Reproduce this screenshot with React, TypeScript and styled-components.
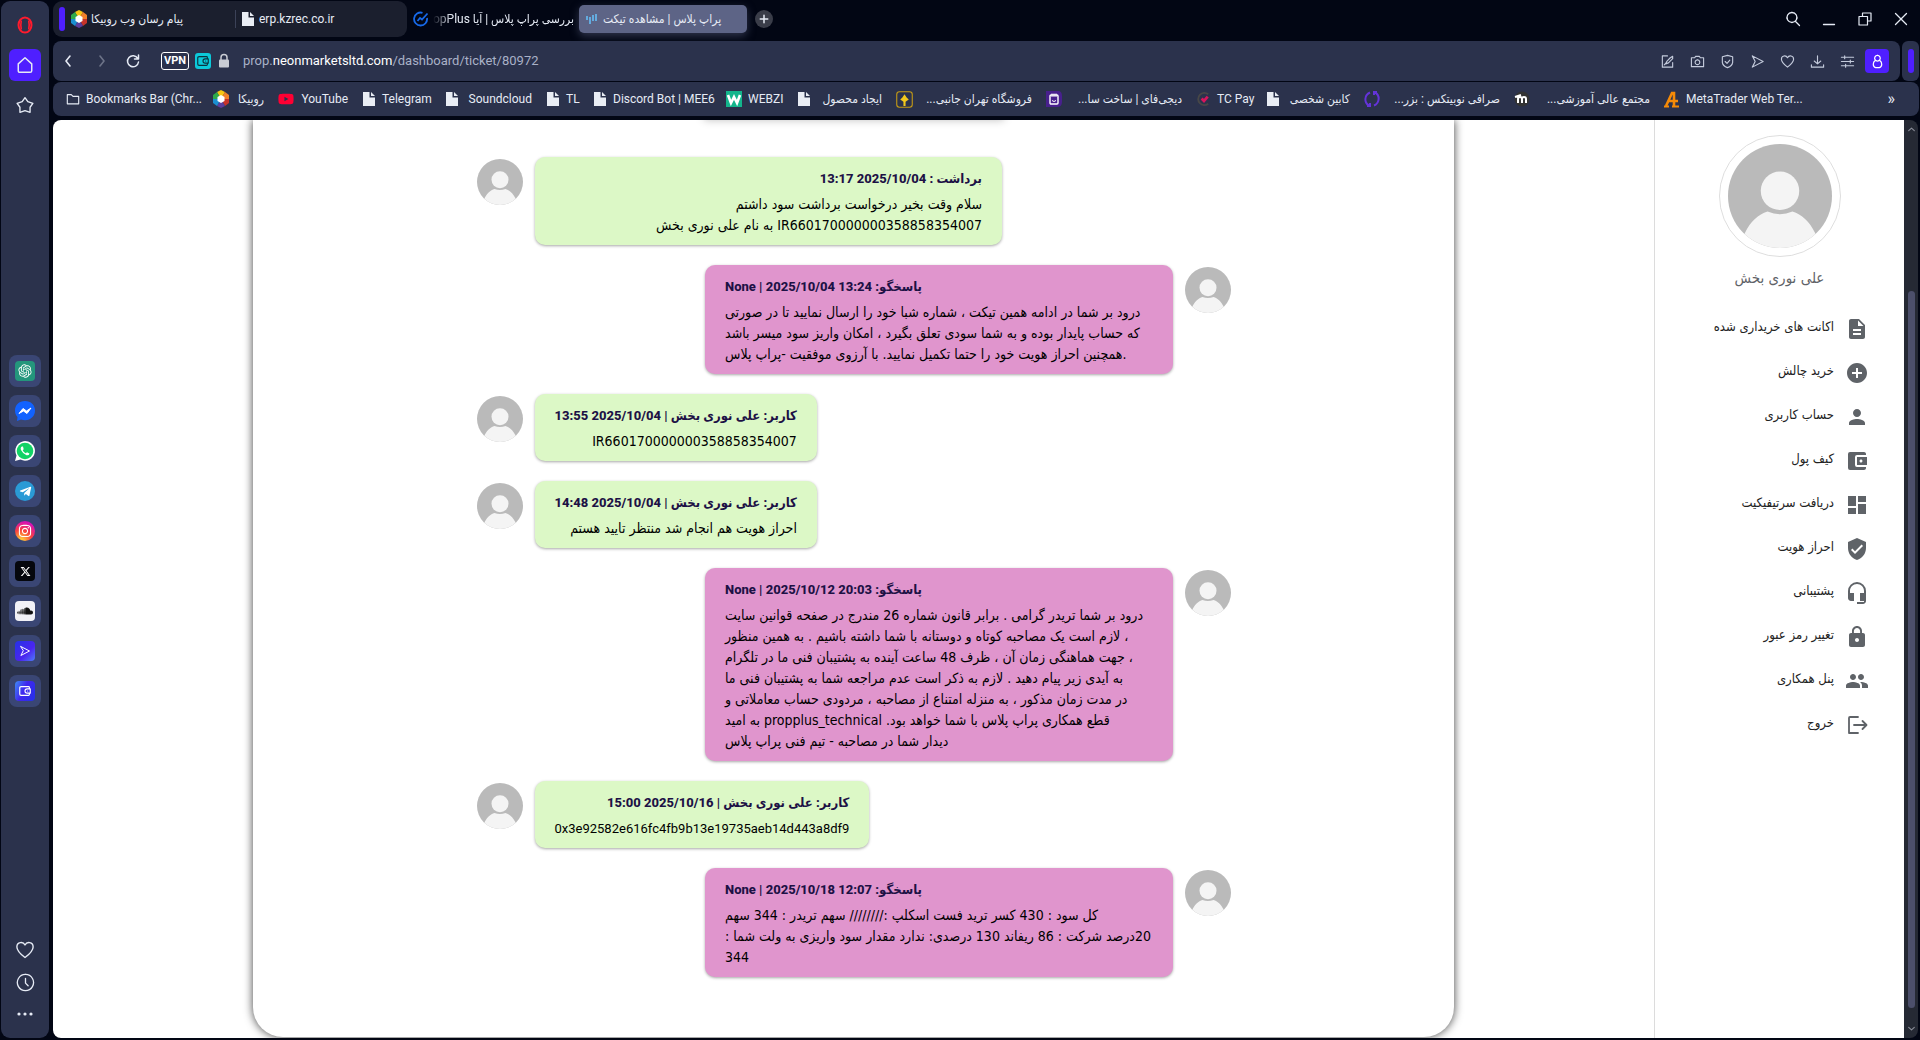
import React from "react";
import styled, { createGlobalStyle } from "styled-components";
import {
  MdDescription,
  MdAddCircle,
  MdPerson,
  MdAccountBalanceWallet,
  MdDashboard,
  MdVerifiedUser,
  MdHeadsetMic,
  MdLock,
  MdPeople,
} from "react-icons/md";
import { FaTelegramPlane, FaInstagram, FaSoundcloud, FaYoutube } from "react-icons/fa";
import { FaXTwitter } from "react-icons/fa6";
import { RiOpenaiFill } from "react-icons/ri";

const c = {
  frame: "#020614",
  panel: "#2b324c",
  group: "#1b1f2e",
  accent: "#4f1fff",
  activeTab: "#5d6486",
  light: "#e6ebf5",
  dim: "#c4cbdc",
};

const uiFont = `Roboto, "DejaVu Sans Condensed", "DejaVu Sans", sans-serif`;
const persianFont = `"DejaVu Sans Condensed", "DejaVu Sans", sans-serif`;

const GlobalStyle = createGlobalStyle`
  *, *::before, *::after { box-sizing: border-box; }
  body { margin: 0; background: ${c.frame}; font-family: ${uiFont}; }
  button { border: 0; padding: 0; background: none; color: inherit; font: inherit; cursor: pointer; }
  a { color: inherit; text-decoration: none; }
  ul { list-style: none; margin: 0; padding: 0; }
  svg { display: block; flex: none; }
`;

/* ---------- window frame ---------- */

const Window = styled.div`
  display: flex;
  gap: 4px;
  height: 100vh;
  padding: 1px 1px 2px;
  overflow: hidden;
  color: ${c.light};
`;

const Rail = styled.nav`
  display: flex;
  flex-direction: column;
  align-items: center;
  justify-content: space-between;
  width: 48px;
  flex: none;
  padding: 8px 0;
  border-radius: 9px;
  background: ${c.panel};
`;

const RailGroup = styled.div<{ $gap: number; $top?: number }>`
  display: flex;
  flex-direction: column;
  align-items: center;
  gap: ${(p) => p.$gap}px;
  padding-top: ${(p) => p.$top ?? 0}px;
`;

const RailButton = styled.button<{ $active?: boolean }>`
  display: grid;
  place-items: center;
  width: 32px;
  height: 32px;
  border-radius: 6px;
  color: ${c.light};
  background: ${(p) => (p.$active ? c.accent : "transparent")};
`;

const AppButton = styled(RailButton)`
  border-radius: 8px;
  background: #3a4674;
`;

const AppTile = styled.span<{ $bg: string; $round?: boolean }>`
  display: grid;
  place-items: center;
  width: 20px;
  height: 20px;
  border-radius: ${(p) => (p.$round ? "50%" : "4px")};
  background: ${(p) => p.$bg};
  color: #fff;
`;

const Browser = styled.div`
  display: flex;
  flex-direction: column;
  flex: 1;
  min-width: 0;
`;

/* ---------- tabs ---------- */

const TabStrip = styled.header`
  display: flex;
  align-items: center;
  height: 36px;
  margin-bottom: 4px;
  font-size: 12px;
`;

const TabGroup = styled.div`
  display: flex;
  align-items: center;
  width: 354px;
  height: 36px;
  padding-left: 6px;
  border-radius: 9px;
  background: ${c.group};
`;

const GroupMark = styled.span`
  flex: none;
  width: 6px;
  height: 24px;
  border-radius: 3px;
  background: ${c.accent};
`;

const Tab = styled.button<{ $w: number; $active?: boolean; $divided?: boolean }>`
  display: flex;
  align-items: center;
  gap: 4px;
  width: ${(p) => p.$w}px;
  height: 28px;
  padding: 0 6px;
  border-radius: 5px;
  background: ${(p) => (p.$active ? c.activeTab : "transparent")};
  box-shadow: ${(p) => (p.$active ? "0 3px 8px rgba(93, 100, 134, 0.5)" : "none")};
  ${(p) => p.$divided && `&::before { content: ""; width: 1px; height: 18px; margin: 0 1px 0 -6px; background: #3c4258; }`}
`;

const TabTitle = styled.span<{ $fade?: boolean }>`
  flex: ${(p) => (p.$fade ? 1 : "none")};
  text-align: start;
  white-space: nowrap;
  ${(p) => p.$fade && "mask-image: linear-gradient(to right, transparent, #000 18px);"}
`;

const NewTab = styled.button`
  display: grid;
  place-items: center;
  width: 18px;
  height: 18px;
  margin-left: 8px;
  border-radius: 50%;
  background: #3a3d49;
`;

const WindowControls = styled.div`
  display: flex;
  gap: 20px;
  margin-left: auto;
  padding-right: 10px;
`;

const Control = styled.button`
  display: grid;
  place-items: center;
  width: 16px;
  height: 16px;
`;

/* ---------- address row ---------- */

const AddressRow = styled.div`
  display: flex;
  gap: 2px;
  height: 40px;
  margin-bottom: 1px;
`;

const AddressBar = styled.div`
  display: flex;
  align-items: center;
  flex: 1;
  padding: 0 11px 0 0;
  border-radius: 8px;
  background: ${c.panel};
`;

const NavButton = styled.button<{ $dim?: boolean }>`
  display: grid;
  place-items: center;
  width: 32px;
  height: 24px;
  opacity: ${(p) => (p.$dim ? 0.35 : 1)};
`;

const Vpn = styled.button`
  width: 28px;
  height: 18px;
  margin: 0 6px 0 12px;
  border: 1px solid #fff;
  border-radius: 3px;
  font-size: 11px;
  font-weight: 700;
  line-height: 16px;
  color: #fff;
`;

const Badge = styled.button`
  display: grid;
  place-items: center;
  width: 16px;
  height: 16px;
  margin-right: 6px;
  border-radius: 3px;
  background: #0cc9da;
  color: #0b3340;
`;

const Url = styled.button`
  flex: 1;
  padding-left: 12px;
  text-align: left;
  font-size: 13px;
  line-height: 20px;
  color: #a9b1c7;

  b {
    font-weight: 400;
    color: #fff;
  }
`;

const Tools = styled.div`
  display: flex;
  gap: 6px;
`;

const Tool = styled.button<{ $active?: boolean }>`
  display: grid;
  place-items: center;
  width: 24px;
  height: 24px;
  border-radius: 4px;
  color: ${(p) => (p.$active ? "#fff" : c.dim)};
  background: ${(p) => (p.$active ? c.accent : "transparent")};
`;

const SideHandle = styled.button`
  display: grid;
  place-items: center;
  width: 17px;
  border-radius: 6px;
  background: ${c.panel};
`;

/* ---------- bookmarks ---------- */

const Bookmarks = styled.nav`
  display: flex;
  align-items: center;
  height: 34px;
  margin-bottom: 4px;
  padding: 0 24px 0 13px;
  border-radius: 8px;
  background: ${c.panel};
  font-size: 12px;
  line-height: 18px;
`;

const Bookmark = styled.a<{ $w: number }>`
  display: flex;
  align-items: center;
  gap: 6px;
  width: ${(p) => p.$w}px;
  flex: none;
  white-space: nowrap;
`;

const BookmarkLabel = styled.span`
  flex: 1;
  padding-right: 14px;
  text-align: right;
`;

const More = styled.button`
  margin-left: auto;
  font-size: 16px;
`;

/* ---------- page ---------- */

const Viewport = styled.div`
  display: flex;
  flex: 1;
  min-height: 0;
  margin-right: 1px;
`;

const Page = styled.div`
  display: flex;
  flex: 1;
  min-width: 0;
  overflow: hidden;
  border-radius: 8px 0 0 8px;
  background: #fff;
  color: #000;
  font-family: ${persianFont};
`;

const Main = styled.main`
  flex: 1;
  min-width: 0;
`;

const Card = styled.section`
  display: flex;
  flex-direction: column;
  align-items: center;
  width: 75%;
  margin: 0 auto;
  padding-bottom: 60px;
  border-radius: 0 0 30px 30px;
  box-shadow: 0 0 10px rgba(0, 0, 0, 0.75);
`;

const CardHeading = styled.div`
  width: 300px;
  height: 20px;
  margin: -20px 0 37px;
  box-shadow: 0 0 8px rgba(0, 0, 0, 0.25);
`;

const Chat = styled.div`
  display: flex;
  flex-direction: column;
  gap: 20px;
  width: 63%;
  max-width: 754px;
`;

const Row = styled.article<{ $agent?: boolean }>`
  display: flex;
  flex-direction: ${(p) => (p.$agent ? "row-reverse" : "row")};
  gap: 12px;
`;

const AvatarSlot = styled.div`
  padding-top: 2px;
`;

const Bubble = styled.div<{ $agent?: boolean; $full?: boolean }>`
  display: flex;
  flex-direction: column;
  gap: 5px;
  width: ${(p) => (p.$full ? "62%" : "auto")};
  padding: 11px 20px 9px;
  border-radius: 10px;
  background: ${(p) => (p.$agent ? "#e095cd" : "#dcf8c6")};
  box-shadow: 0 1px 3px rgba(0, 0, 0, 0.35);
  text-align: ${(p) => (p.$agent ? "left" : "right")};
  font-size: 14px;
  line-height: 21px;
  white-space: nowrap;
`;

const BubbleTitle = styled.strong`
  font-family: ${uiFont};
  font-size: 13px;
  font-weight: 800;
  color: #1d1145;
`;

const BubbleLine = styled.div<{ $hash?: boolean }>`
  font-family: ${(p) => (p.$hash ? uiFont : persianFont)};
  font-size: ${(p) => (p.$hash ? 13 : 14)}px;
`;

const Sidebar = styled.aside`
  width: 250px;
  flex: none;
  padding: 15px 0 0;
  border-left: 1px solid #dcdcdc;
`;

const Profile = styled.div`
  display: flex;
  flex-direction: column;
  align-items: center;
  gap: 9px;
  margin-bottom: 17px;
  font-size: 15px;
  line-height: 24px;
  color: #5f6368;
`;

const ProfileRing = styled.div`
  padding: 8px;
  border: 1px solid #dedede;
  border-radius: 50%;
`;

const MenuItem = styled.a`
  display: flex;
  align-items: center;
  gap: 11px;
  height: 44px;
  padding-right: 35px;
  font-size: 13px;
  line-height: 18px;
  color: #222;

  svg {
    color: #5f6368;
  }

  span {
    padding-bottom: 4px;
  }
`;

const Scrollbar = styled.div`
  display: flex;
  flex-direction: column;
  align-items: center;
  width: 14px;
  padding: 5px 0;
  border-radius: 0 8px 8px 0;
  background: #252934;
  color: #8a8d98;
`;

const ScrollTrack = styled.div`
  display: flex;
  flex-direction: column;
  justify-content: flex-end;
  flex: 1;
  padding: 0 0 16px;
`;

const ScrollThumb = styled.div`
  width: 7px;
  height: 82%;
  border-radius: 4px;
  background: #4c4f6b;
`;

/* ---------- drawings ---------- */

const Line = ({ d, size = 16, w = 1.3, box = 16 }: { d: string; size?: number; w?: number; box?: number }) => (
  <svg width={size} height={size} viewBox={`0 0 ${box} ${box}`} fill="none" stroke="currentColor" strokeWidth={w} strokeLinecap="round" strokeLinejoin="round">
    <path d={d} />
  </svg>
);

const heart = "M8 14C3.500 10.500 1.500 8.500 1.500 5.500C1.500 1.500 6.500 1 8 4C9.500 1 14.500 1.500 14.500 5.500C14.500 8.500 12.500 10.500 8 14Z";
const sendArrow = "M2.500 2L14 8L2.500 14L5.500 8Z";
const wallet = "M13 5V4Q13 3 12 3H3.500Q2 3 2 4.500V11.500Q2 13 3.500 13H12Q13 13 13 12V11M14 5.500H10.500Q8 5.500 8 8T10.500 10.500H14ZM11 8h.1";

const Avatar = ({ size }: { size: number }) => (
  <svg width={size} height={size} viewBox="0 0 100 100">
    <defs>
      <clipPath id={`disc${size}`}>
        <circle cx="50" cy="50" r="50" />
      </clipPath>
    </defs>
    <g clipPath={`url(#disc${size})`}>
      <rect width="100" height="100" fill="#bababa" />
      <path d="M16 86C22 74 29 68 38 65Q50 70 62 65C71 68 78 74 84 86L84 100H16Z" fill="#f4f4f4" />
      <circle cx="50" cy="45" r="18.500" fill="#f4f4f4" />
    </g>
  </svg>
);

const PageIcon = () => (
  <svg width="14" height="16" viewBox="0 0 14 16">
    <path d="M1 1H7.500V6.500H13V15H1ZM9 1L13 5H9Z" fill="#e9edf4" />
  </svg>
);

const Rubika = () => (
  <svg width="16" height="18" viewBox="0 0 16 18">
    <path d="M8 0L12 2L8 9L4 2Z" fill="#f6c614" />
    <path d="M12 2L16 5V9L8 9Z" fill="#f0802a" />
    <path d="M16 9V13L12 16L8 9Z" fill="#c6342a" />
    <path d="M12 16L8 18L4 16L8 9Z" fill="#5b3e9e" />
    <path d="M4 16L0 13V9H8Z" fill="#1b8fd0" />
    <path d="M0 9V5L4 2L8 9Z" fill="#2faa4a" />
    <path d="M8 5L11.500 7V11L8 13L4.500 11V7Z" fill="#fff" />
  </svg>
);

const YouTubeIcon = () => <FaYoutube size={16} color="#ff0033" />;

const Webzi = () => (
  <svg width="16" height="16" viewBox="0 0 16 16">
    <rect width="16" height="16" fill="#13b58c" />
    <path d="M2 4L5 12L8 6L11 12L14 4" fill="none" stroke="#fff" strokeWidth="2.600" />
  </svg>
);

const GoldBox = () => (
  <svg width="17" height="17" viewBox="0 0 16 16" fill="none" stroke="#c79c14">
    <rect x="0.700" y="0.700" width="14.600" height="14.600" rx="2.500" />
    <path d="M8 3L10 6L12 8L9 10V14H7V10L4 8L6 6Z" fill="#f3c81c" stroke="none" />
  </svg>
);

const Digify = () => (
  <svg width="16" height="16" viewBox="0 0 16 16">
    <path d="M0 0H12Q16 0 16 5V11Q16 16 11 16H0Z" fill="#48208d" />
    <rect x="4" y="4" width="8" height="9" rx="1" fill="none" stroke="#fff" strokeWidth="1.400" />
    <path d="M6 2.500V6M8 2.500V6M10 2.500V6M6 9.500Q8 11.500 10 9.500" stroke="#fff" fill="none" />
  </svg>
);

const TcPay = () => (
  <svg width="15" height="16" viewBox="0 0 16 16" fill="none">
    <path d="M13 3A6.500 6.500 0 1 0 13 13" stroke="#474747" strokeWidth="2" />
    <path d="M6 7.500L8.500 10L12.500 5.500" stroke="#d6155c" strokeWidth="3" />
  </svg>
);

const Nobitex = () => (
  <svg width="16" height="16" viewBox="0 0 16 16" fill="none" stroke="#6433d9" strokeWidth="2">
    <path d="M6 1.500C0 4 0 12 5 14.500M3 15H6V12M10 14.500C16 12 16 4 11 1.500M13 1H10V4" />
  </svg>
);

const Moodle = () => (
  <svg width="16" height="16" viewBox="0 0 16 16" fill="none">
    <circle cx="8" cy="8" r="7.500" fill="#333" />
    <path d="M4 12V8Q4 6 6 6T8 8V12M8 8Q8 6 10 6T12 8V12M1 6L7 4" stroke="#fff" strokeWidth="2" />
  </svg>
);

const MetaTrader = () => (
  <svg width="16" height="17" viewBox="0 0 16 17" fill="none" stroke="#f58a07">
    <path d="M2 15L8 2H10V16M5 10H14" strokeWidth="2.600" />
    <path d="M0 15.500H5M8 15.500H15" strokeWidth="2" />
  </svg>
);

const Folder = () => <Line d="M1.500 3H6L8 5H14.500V13.500H1.500Z" size={14} />;

const WhatsApp = () => (
  <svg width="22" height="22" viewBox="0 0 22 22">
    <path d="M1 21L2.500 15.500A9.800 9.800 0 1 1 6.500 19.500Z" fill="#fff" />
    <circle cx="11" cy="11" r="8.300" fill="#12d366" />
    <path d="M8 6.500Q6 7.500 7 10Q9 14 12.500 15.300Q15 15.700 15.500 13.500L13 12.300L11.800 13.300Q9.500 12.200 8.700 10.300L9.700 9.200L9 6.500Z" fill="#fff" />
  </svg>
);

const Messenger = () => (
  <svg width="20" height="20" viewBox="0 0 20 20">
    <path d="M10 0C4 0 0 4 0 9.500C0 12.500 1 14.500 2.500 16L2 20L6 18.500C14 21 20 16 20 9.500C20 4 16 0 10 0Z" fill="#1262ff" />
    <path d="M4 12.500L8 7.500L11.500 10L16 7L12 12.500L8.500 10Z" fill="#fff" stroke="#fff" strokeLinejoin="round" />
  </svg>
);

/* ---------- data ---------- */

const apps: [string, React.ReactNode][] = [
  ["ChatGPT", <AppTile $bg="#24967c"><RiOpenaiFill size={16} /></AppTile>],
  ["Messenger", <Messenger />],
  ["WhatsApp", <WhatsApp />],
  ["Telegram", <AppTile $bg="#2a9ad6" $round><FaTelegramPlane size={13} /></AppTile>],
  ["Instagram", <AppTile $bg="radial-gradient(circle at 30% 100%, #ffc13b 10%, #f8433f 45%, #d611b5 80%)" $round><FaInstagram size={14} /></AppTile>],
  ["X", <AppTile $bg="#05070d"><FaXTwitter size={11} /></AppTile>],
  ["SoundCloud", <AppTile $bg="#f1f1f6"><FaSoundcloud size={16} color="#111" /></AppTile>],
  ["Player", <AppTile $bg="linear-gradient(135deg, #2432e8, #4b25f0 60%, #4f7cf8)"><Line d={sendArrow} size={12} /></AppTile>],
  ["Wallet", <AppTile $bg="linear-gradient(115deg, #3f8cf6, #4026ee 45%, #2432e8)"><Line d={wallet} size={14} /></AppTile>],
];

type BookmarkData = { label: string; icon: React.ReactNode; w: number; rtl?: boolean };
const bookmarks: BookmarkData[] = [
  { label: "Bookmarks Bar (Chr...", icon: <Folder />, w: 147 },
  { label: "روبیکا", icon: <Rubika />, w: 65, rtl: true },
  { label: "YouTube", icon: <YouTubeIcon />, w: 84 },
  { label: "Telegram", icon: <PageIcon />, w: 83 },
  { label: "Soundcloud", icon: <PageIcon />, w: 101 },
  { label: "TL", icon: <PageIcon />, w: 47 },
  { label: "Discord Bot | MEE6", icon: <PageIcon />, w: 133 },
  { label: "WEBZI", icon: <Webzi />, w: 71 },
  { label: "ایجاد محصول", icon: <PageIcon />, w: 99, rtl: true },
  { label: "فروشگاه تهران جانبی...", icon: <GoldBox />, w: 150, rtl: true },
  { label: "دیجی‌فای | ساخت سا...", icon: <Digify />, w: 150, rtl: true },
  { label: "TC Pay", icon: <TcPay />, w: 70 },
  { label: "کابین شخصی", icon: <PageIcon />, w: 98, rtl: true },
  { label: "صرافی نوبیتکس : بزر...", icon: <Nobitex />, w: 150, rtl: true },
  { label: "مجتمع عالی آموزشی...", icon: <Moodle />, w: 150, rtl: true },
  { label: "MetaTrader Web Ter...", icon: <MetaTrader />, w: 150 },
];

const tools: [string, string][] = [
  ["Edit page", "M8 2H2.500V14H13.500V9M6 10.500L7.500 7.500L11 4L13.500 2.500L13.500 5L9 9.500ZM4.500 11.500L6.500 9.500"],
  ["Snapshot", "M5 4L6 2.500H10L11 4H14.500V13.500H1.500V4ZM8 6.300A2.500 2.500 0 1 1 7.900 6.300"],
  ["Blocker", "M8 1.500L13.500 3V9Q13 13 8 14.500Q3 13 2.500 9V3ZM5.500 8L7.500 10L10.500 6.500"],
  ["Send", sendArrow],
  ["Favourite", heart],
  ["Downloads", "M8 2V10M4.500 7.500L8 10.500L11.500 7.500M1.500 11.500V14H14.500V11.500"],
  ["Easy setup", "M1.500 3.500H14.500M1.500 8H14.500M1.500 12.500H14.500M5 2V5M11 6.500V9.500M6 11V14"],
];

type MessageData = { agent?: boolean; full?: boolean; hash?: boolean; title: string; lines: string[] };
const messages: MessageData[] = [
  {
    full: true,
    title: "برداشت : 2025/10/04 13:17",
    lines: ["سلام وقت بخیر درخواست برداشت سود داشتم", "IR660170000000358858354007 به نام علی نوری بخش"],
  },
  {
    agent: true,
    full: true,
    title: "پاسخگو: 13:24 2025/10/04 | None",
    lines: [
      "درود بر شما در ادامه همین تیکت ، شماره شبا خود را ارسال نمایید تا در صورتی",
      "که حساب پایدار بوده و به شما سودی تعلق بگیرد ، امکان واریز سود میسر باشد",
      ".همچنین احراز هویت خود را حتما تکمیل نمایید. با آرزوی موفقیت -پراپ پلاس",
    ],
  },
  { title: "کاربر: علی نوری بخش | 2025/10/04 13:55", lines: ["IR660170000000358858354007"] },
  { title: "کاربر: علی نوری بخش | 2025/10/04 14:48", lines: ["احراز هویت هم انجام شد منتظر تایید هستم"] },
  {
    agent: true,
    full: true,
    title: "پاسخگو: 20:03 2025/10/12 | None",
    lines: [
      "درود بر شما تریدر گرامی . برابر قانون شماره 26 مندرج در صفحه قوانین سایت",
      "، لازم است یک مصاحبه کوتاه و دوستانه با شما داشته باشیم . به همین منظور",
      "، جهت هماهنگی زمان آن ، ظرف 48 ساعت آینده به پشتیبان فنی ما در تلگرام",
      "به آیدی زیر پیام دهید . لازم به ذکر است عدم مراجعه شما به پشتیبان فنی ما",
      "در مدت زمان مذکور ، به منزله امتناع از مصاحبه ، مردودی حساب معاملاتی و",
      "قطع همکاری پراپ پلاس با شما خواهد بود. propplus_technical به امید",
      "دیدار شما در مصاحبه - تیم فنی پراپ پلاس",
    ],
  },
  { hash: true, title: "کاربر: علی نوری بخش | 2025/10/16 15:00", lines: ["0x3e92582e616fc4fb9b13e19735aeb14d443a8df9"] },
  {
    agent: true,
    full: true,
    title: "پاسخگو: 12:07 2025/10/18 | None",
    lines: [
      "کل سود : 430 کسر ترید فست اسکلپ ://////// سهم تریدر : 344 سهم",
      "20درصد شرکت : 86 ریفاند 130 درصدی: ندارد مقدار سود واریزی به ولت شما :",
      "344",
    ],
  },
];

const Exit = () => <Line d="M13 4H5Q4 4 4 5V20H13M9 12H21M17.500 8L21.500 12L17.500 16" size={24} box={24} w={1.8} />;

const menu: [string, React.ReactNode][] = [
  ["اکانت های خریداری شده", <MdDescription size={24} />],
  ["خرید چالش", <MdAddCircle size={24} />],
  ["حساب کاربری", <MdPerson size={24} />],
  ["کیف پول", <MdAccountBalanceWallet size={24} />],
  ["دریافت سرتیفیکیت", <MdDashboard size={24} />],
  ["احراز هویت", <MdVerifiedUser size={24} />],
  ["پشتیبانی", <MdHeadsetMic size={24} />],
  ["تغییر رمز عبور", <MdLock size={24} />],
  ["پنل همکاری", <MdPeople size={24} />],
  ["خروج", <Exit />],
];

/* ---------- parts ---------- */

const Message = ({ agent, full, hash, title, lines }: MessageData) => (
  <Row $agent={agent}>
    <AvatarSlot>
      <Avatar size={46} />
    </AvatarSlot>
    <Bubble $agent={agent} $full={full}>
      <BubbleTitle dir="rtl">{title}</BubbleTitle>
      <div>
        {lines.map((line) => (
          <BubbleLine key={line} dir="rtl" $hash={hash}>
            {line}
          </BubbleLine>
        ))}
      </div>
    </Bubble>
  </Row>
);

const SideRail = () => (
  <Rail aria-label="Sidebar">
    <RailGroup $gap={8}>
      <RailButton aria-label="Opera">
        <svg width="18" height="18" viewBox="0 0 18 18" fill="none" stroke="#ff1b2d">
          <ellipse cx="9" cy="9" rx="6.500" ry="7.500" strokeWidth="2" />
          <path d="M5.300 4.500Q4.300 9 5.300 13.500M12.700 4.500Q13.700 9 12.700 13.500" strokeWidth="1.600" />
        </svg>
      </RailButton>
      <RailButton $active aria-label="Home">
        <Line d="M8 1.500L14 7V13Q14 14.500 12.500 14.500H3.500Q2 14.500 2 13V7Z" size={18} />
      </RailButton>
      <RailButton aria-label="Pinboards">
        <Line d="M8 1.500L10.500 5L15 6.500L12.500 10V14.500L8 13L3.500 14.500V10L1 6.500L5.500 5Z" size={18} w={1.2} />
      </RailButton>
    </RailGroup>
    <RailGroup $gap={8} $top={7}>
      {apps.map(([name, icon]) => (
        <AppButton key={name} aria-label={name}>
          {icon}
        </AppButton>
      ))}
    </RailGroup>
    <RailGroup $gap={0}>
      <RailButton aria-label="Favourites"><Line d={heart} size={20} w={1.1} /></RailButton>
      <RailButton aria-label="History">
        <Line d="M8 1.200A6.800 6.800 0 1 1 7.900 1.200M8 4.500V8.500L10.200 10.800" size={19} w={1.1} />
      </RailButton>
      <RailButton aria-label="More">
        <svg width="16" height="4" viewBox="0 0 16 4" fill="currentColor">
          <circle cx="2" cy="2" r="1.600" />
          <circle cx="8" cy="2" r="1.600" />
          <circle cx="14" cy="2" r="1.600" />
        </svg>
      </RailButton>
    </RailGroup>
  </Rail>
);

export default function App() {
  return (
    <>
      <GlobalStyle />
      <Window>
        <SideRail />
        <Browser>
          <TabStrip>
            <TabGroup>
              <GroupMark />
              <Tab $w={170}>
                <Rubika />
                <TabTitle dir="rtl">پیام رسان وب روبیکا</TabTitle>
              </Tab>
              <Tab $w={168} $divided>
                <PageIcon />
                <TabTitle>erp.kzrec.co.ir</TabTitle>
              </Tab>
            </TabGroup>
            <Tab $w={172}>
              <svg width="16" height="16" viewBox="0 0 16 16" fill="none" stroke="#1769e8" strokeWidth="1.800">
                <path d="M14 7A6.500 6.500 0 1 1 9.500 1.800M4.500 10L7 7L9 8.500L14.500 2.500" />
              </svg>
              <TabTitle $fade dir="rtl">بررسی پراپ پلاس | آیا opPlus</TabTitle>
            </Tab>
            <Tab $w={168} $active>
              <svg width="14" height="14" viewBox="0 0 14 14" fill="none" stroke="#66bdf5" strokeWidth="1.600">
                <path d="M2 4V8M5 5V12M8 3V9M11 2V9" />
              </svg>
              <TabTitle dir="rtl">پراپ پلاس | مشاهده تیکت</TabTitle>
            </Tab>
            <NewTab aria-label="New tab"><Line d="M8 3V13M3 8H13" size={12} w={2} /></NewTab>
            <WindowControls>
              <Control aria-label="Search"><Line d="M7 1.500A5 5 0 1 1 6.900 1.500M10.800 10.800L14.500 14.500" /></Control>
              <Control aria-label="Minimize"><Line d="M2.500 13.500H13.500" /></Control>
              <Control aria-label="Restore"><Line d="M2 5.500H10.500V14H2ZM5.500 5.500V2H14V10H10.500" w={1.2} /></Control>
              <Control aria-label="Close"><Line d="M2.500 2.500L13.500 13.500M13.500 2.500L2.500 13.500" /></Control>
            </WindowControls>
          </TabStrip>

          <AddressRow>
            <AddressBar>
              <NavButton aria-label="Back"><Line d="M9 3L5 8L9 13" w={1.6} /></NavButton>
              <NavButton $dim aria-label="Forward"><Line d="M7 3L11 8L7 13" w={1.6} /></NavButton>
              <NavButton aria-label="Reload"><Line d="M12.800 5.500A5.500 5.500 0 1 0 13.500 9M13.500 2V6H9.500" w={1.5} /></NavButton>
              <Vpn>VPN</Vpn>
              <Badge aria-label="Wallet"><Line d={wallet} size={14} /></Badge>
              <svg width="14" height="16" viewBox="0 0 14 16">
                <rect x="2" y="6.500" width="10" height="8" rx="1" fill="#c9ccd4" />
                <path d="M4 7V4.500A3 3 0 0 1 10 4.500V7" fill="none" stroke="#c9ccd4" strokeWidth="1.500" />
              </svg>
              <Url>
                prop.<b>neonmarketsltd.com</b>/dashboard/ticket/80972
              </Url>
              <Tools>
                {tools.map(([name, d]) => (
                  <Tool key={name} aria-label={name}>
                    <Line d={d} size={15} w={1.2} />
                  </Tool>
                ))}
                <Tool $active aria-label="Profile">
                  <Line d="M8 1.500A3 3 0 1 1 7.900 1.500M5.500 7Q3.500 8.500 3.500 11Q3.500 14 6 14.500H10Q12.500 14 12.500 11Q12.500 8.500 10.500 7" size={15} />
                </Tool>
              </Tools>
            </AddressBar>
            <SideHandle aria-label="Side panel">
              <GroupMark />
            </SideHandle>
          </AddressRow>

          <Bookmarks aria-label="Bookmarks">
            {bookmarks.map((b) => (
              <Bookmark key={b.label} href="#" $w={b.w}>
                {b.icon}
                <BookmarkLabel>
                  <bdi dir={b.rtl ? "rtl" : "ltr"}>{b.label}</bdi>
                </BookmarkLabel>
              </Bookmark>
            ))}
            <More aria-label="More bookmarks">»</More>
          </Bookmarks>

          <Viewport>
            <Page>
              <Main>
                <Card>
                  <CardHeading />
                  <Chat>
                    {messages.map((m) => (
                      <Message key={m.title} {...m} />
                    ))}
                  </Chat>
                </Card>
              </Main>
              <Sidebar dir="rtl">
                <Profile>
                  <ProfileRing>
                    <Avatar size={104} />
                  </ProfileRing>
                  علی نوری بخش
                </Profile>
                <ul>
                  {menu.map(([label, icon]) => (
                    <li key={label}>
                      <MenuItem href="#">
                        {icon}
                        <span>{label}</span>
                      </MenuItem>
                    </li>
                  ))}
                </ul>
              </Sidebar>
            </Page>
            <Scrollbar>
              <Line d="M3 10L8 5.500L13 10" size={9} w={2} />
              <ScrollTrack>
                <ScrollThumb />
              </ScrollTrack>
              <Line d="M3 6L8 10.500L13 6" size={9} w={2} />
            </Scrollbar>
          </Viewport>
        </Browser>
      </Window>
    </>
  );
}
